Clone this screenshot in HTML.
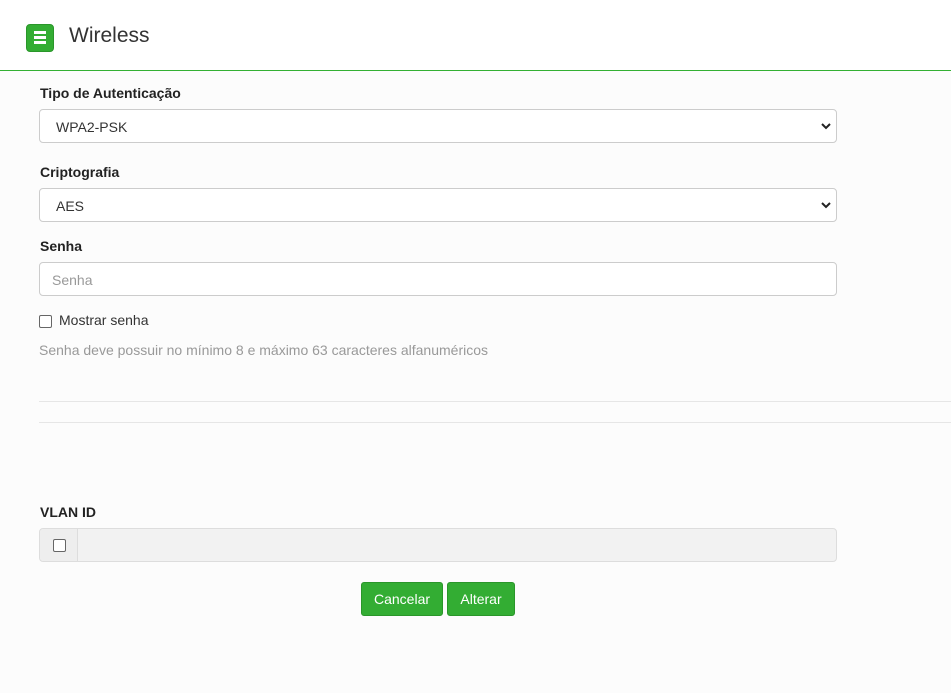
<!DOCTYPE html>
<html><head><meta charset="utf-8"><style>
*{box-sizing:border-box;margin:0;padding:0}
body{width:951px;height:693px;background:#fcfcfc;font-family:"Liberation Sans",Arial,sans-serif;color:#333;position:relative;overflow:hidden}
.hdr{position:absolute;left:0;top:0;width:951px;height:70px;background:#fff}
.gl{position:absolute;left:0;top:70px;width:951px;height:1px;background:#33b033}
.menu{position:absolute;left:26px;top:24px;width:28px;height:28px;background:#33ad33;border:1px solid #2a962a;border-radius:4px}
.menu i{position:absolute;left:7px;width:12px;height:3px;background:#fff}
.title{position:absolute;left:69px;top:24px;font-size:21px;color:#333}
.lbl{position:absolute;left:40px;font-size:14px;font-weight:bold;color:#222}
.box{position:absolute;left:39px;width:798px;height:34px;background:#fff;border:1px solid #ccc;border-radius:4px;font-size:14px;padding:9px 0 0 16px;color:#333}
.box svg{position:absolute;right:5px;top:12px}
.ph{color:#999;padding-left:12px}
.hr{position:absolute;left:39px;width:912px;height:1px;background:#e6e6e6}
.btn{position:absolute;top:582px;height:34px;background:#33ad33;border:1px solid #2a962a;border-radius:3px;color:#fff;font-size:14px;text-align:center;line-height:32px}
.cb{position:absolute;width:13px;height:13px;border:1px solid #666;border-radius:2px;background:#fff}
</style></head><body>
<div class="hdr">
<div class="menu"><i style="top:6px"></i><i style="top:11px"></i><i style="top:16px"></i></div>
<div class="title">Wireless</div>
</div>
<div class="gl"></div>
<div class="lbl" style="top:85px">Tipo de Autenticação</div>
<div class="box" style="top:109px">WPA2-PSK<svg width="10" height="8" viewBox="0 0 10 8"><path d="M1 2l4 4 4-4" stroke="#222" stroke-width="2" fill="none"/></svg></div>
<div class="lbl" style="top:164px">Criptografia</div>
<div class="box" style="top:188px">AES<svg width="10" height="8" viewBox="0 0 10 8"><path d="M1 2l4 4 4-4" stroke="#222" stroke-width="2" fill="none"/></svg></div>
<div class="lbl" style="top:238px">Senha</div>
<div class="box ph" style="top:262px">Senha</div>
<div class="cb" style="left:39px;top:315px"></div>
<div style="position:absolute;left:59px;top:312px;font-size:14px;color:#333">Mostrar senha</div>
<div style="position:absolute;left:39px;top:342px;font-size:14px;color:#999">Senha deve possuir no mínimo 8 e máximo 63 caracteres alfanuméricos</div>
<div class="hr" style="top:401px"></div>
<div class="hr" style="top:422px"></div>
<div class="lbl" style="top:504px">VLAN ID</div>
<div style="position:absolute;left:39px;top:528px;width:798px;height:34px;background:#f2f2f2;border:1px solid #ddd;border-radius:4px">
<div style="position:absolute;left:0;top:0;width:38px;height:32px;background:#eee;border-right:1px solid #ddd;border-radius:4px 0 0 4px"></div>
<div class="cb" style="left:13px;top:10px"></div>
</div>
<div class="btn" style="left:361px;width:82px">Cancelar</div>
<div class="btn" style="left:447px;width:68px">Alterar</div>
</body></html>
